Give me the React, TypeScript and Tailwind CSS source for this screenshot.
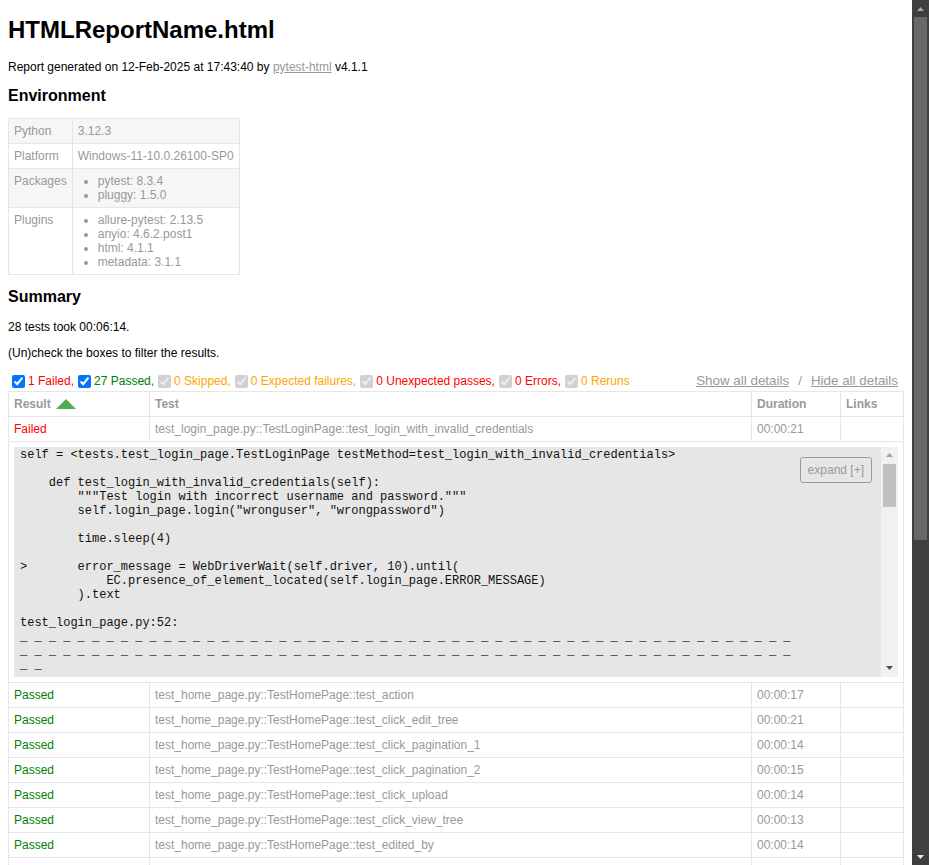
import React from "react";

const env: { key: string; value: string | string[] }[] = [
  { key: "Python", value: "3.12.3" },
  { key: "Platform", value: "Windows-11-10.0.26100-SP0" },
  { key: "Packages", value: ["pytest: 8.3.4", "pluggy: 1.5.0"] },
  {
    key: "Plugins",
    value: ["allure-pytest: 2.13.5", "anyio: 4.6.2.post1", "html: 4.1.1", "metadata: 3.1.1"],
  },
];

const filters = [
  { label: "1 Failed,", color: "text-[#ff0000]", on: true },
  { label: "27 Passed,", color: "text-[#008000]", on: true },
  { label: "0 Skipped,", color: "text-[#ffa500]", on: false },
  { label: "0 Expected failures,", color: "text-[#ffa500]", on: false },
  { label: "0 Unexpected passes,", color: "text-[#ff0000]", on: false },
  { label: "0 Errors,", color: "text-[#ff0000]", on: false },
  { label: "0 Reruns", color: "text-[#ffa500]", on: false },
];

const logLines = [
  "self = <tests.test_login_page.TestLoginPage testMethod=test_login_with_invalid_credentials>",
  "",
  "    def test_login_with_invalid_credentials(self):",
  '        """Test login with incorrect username and password."""',
  '        self.login_page.login("wronguser", "wrongpassword")',
  "",
  "        time.sleep(4)",
  "",
  ">       error_message = WebDriverWait(self.driver, 10).until(",
  "            EC.presence_of_element_located(self.login_page.ERROR_MESSAGE)",
  "        ).text",
  "",
  "test_login_page.py:52:",
  "_ ".repeat(53) + "_",
  "_ ".repeat(53) + "_",
  "_ _",
  "",
  "self = <selenium.webdriver.support.wait.WebDriverWait (session=\"3f0c\")>",
];

const passed = [
  ["test_home_page.py::TestHomePage::test_action", "00:00:17"],
  ["test_home_page.py::TestHomePage::test_click_edit_tree", "00:00:21"],
  ["test_home_page.py::TestHomePage::test_click_pagination_1", "00:00:14"],
  ["test_home_page.py::TestHomePage::test_click_pagination_2", "00:00:15"],
  ["test_home_page.py::TestHomePage::test_click_upload", "00:00:14"],
  ["test_home_page.py::TestHomePage::test_click_view_tree", "00:00:13"],
  ["test_home_page.py::TestHomePage::test_edited_by", "00:00:14"],
  ["test_home_page.py::TestHomePage::test_filter", "00:00:16"],
];

const cell = "border border-[#e6e6e6] p-[5px] text-left align-top";

function Triangle({ up }: { up: boolean }) {
  return (
    <svg width="7" height="4" viewBox="0 0 7 4">
      <path d={up ? "M0 4 L3.5 0 L7 4 Z" : "M0 0 L3.5 4 L7 0 Z"} fill="currentColor" />
    </svg>
  );
}

function LogWrapper() {
  return (
    <div className="flex h-[230px] bg-[#e6e6e6]">
      <div className="relative min-w-0 flex-1 overflow-hidden pl-[6px] pt-[1px] font-['Liberation_Mono','Courier_New',monospace] text-[12px] text-[#111]">
        {logLines.map((line, i) => (
          <div key={i} className="h-[14px] whitespace-pre leading-[14px]">
            {line}
          </div>
        ))}
        <div className="absolute right-[9px] top-[10px] rounded-[3px] border border-[#999] bg-[#e6e6e6] px-[7px] py-[5px] font-['Liberation_Sans',Arial,sans-serif] leading-[14px] text-[#999]">
          expand [+]
        </div>
      </div>
      <div className="flex w-[17px] shrink-0 flex-col bg-[#f1f1f1]">
        <div className="flex h-[17px] items-center justify-center text-[#a3a3a3]">
          <Triangle up />
        </div>
        <div className="flex-1 px-[2px]">
          <div className="h-[43px] bg-[#c1c1c1]" />
        </div>
        <div className="flex h-[17px] items-center justify-center text-[#505050]">
          <Triangle up={false} />
        </div>
      </div>
    </div>
  );
}

export default function App() {
  return (
    <div className="flex h-[865px] w-[929px] overflow-hidden bg-white font-['Liberation_Sans',Arial,sans-serif] text-[12px] leading-[14px] text-[#999]">
      <div className="min-w-0 flex-1 overflow-hidden px-2">
        <h1 className="mb-[16px] mt-[16px] text-[24px] font-bold leading-[28px] text-black">
          HTMLReportName.html
        </h1>
        <p className="text-black">
          Report generated on 12-Feb-2025 at 17:43:40 by{" "}
          <a className="text-[#999] underline">pytest-html</a> v4.1.1
        </p>
        <h2 className="mb-[13px] mt-[13px] text-[16px] font-bold leading-[18.4px] text-black">
          Environment
        </h2>
        <table className="border-collapse">
          <tbody>
            {env.map((row, i) => (
              <tr key={row.key} className={i % 2 === 0 ? "bg-[#f6f6f6]" : ""}>
                <td className={cell}>{row.key}</td>
                <td className={cell}>
                  {Array.isArray(row.value) ? (
                    <ul className="list-disc px-[20px]">
                      {row.value.map((v) => (
                        <li key={v}>{v}</li>
                      ))}
                    </ul>
                  ) : (
                    row.value
                  )}
                </td>
              </tr>
            ))}
          </tbody>
        </table>
        <h2 className="mb-[13px] mt-[13px] text-[16px] font-bold leading-[18.4px] text-black">
          Summary
        </h2>
        <p className="text-black">28 tests took 00:06:14.</p>
        <p className="mt-[12px] text-black">(Un)check the boxes to filter the results.</p>
        <div className="mt-[12px] flex h-[19px] items-center justify-between">
          <div className="flex items-center">
            {filters.map((f) => (
              <React.Fragment key={f.label}>
                <input
                  type="checkbox"
                  checked
                  readOnly
                  disabled={!f.on}
                  className="m-[3px_3px_3px_4px] h-[13px] w-[13px]"
                />
                <span className={f.color}>{f.label}</span>
              </React.Fragment>
            ))}
          </div>
          <div className="pr-[6px] text-[13.4px]">
            <a className="underline">Show all details</a>
            <span className="mx-[9px]">/</span>
            <a className="underline">Hide all details</a>
          </div>
        </div>
        <table className="w-full table-fixed border-collapse border border-[#e6e6e6]">
          <thead>
            <tr>
              <th className={`${cell} w-[141px] font-bold`}>
                <span className="inline-flex items-center">
                  Result
                  <svg width="20" height="10" viewBox="0 0 20 10" className="ml-[5px]">
                    <path d="M0 10 L10 0 L20 10 Z" fill="#4caf50" />
                  </svg>
                </span>
              </th>
              <th className={`${cell} font-bold`}>Test</th>
              <th className={`${cell} w-[89px] font-bold`}>Duration</th>
              <th className={`${cell} w-[63px] font-bold`}>Links</th>
            </tr>
          </thead>
          <tbody>
            <tr>
              <td className={`${cell} text-[#ff0000]`}>Failed</td>
              <td className={cell}>test_login_page.py::TestLoginPage::test_login_with_invalid_credentials</td>
              <td className={cell}>00:00:21</td>
              <td className={cell}></td>
            </tr>
            <tr>
              <td colSpan={4} className={cell}>
                <LogWrapper />
              </td>
            </tr>
            {passed.map(([name, dur]) => (
              <tr key={name}>
                <td className={`${cell} text-[#008000]`}>Passed</td>
                <td className={cell}>{name}</td>
                <td className={cell}>{dur}</td>
                <td className={cell}></td>
              </tr>
            ))}
          </tbody>
        </table>
      </div>
      <div className="flex w-[17px] shrink-0 flex-col bg-[#3f3f3f]">
        <div className="flex h-[17px] items-center justify-center text-[#a8a8a8]">
          <Triangle up />
        </div>
        <div className="flex-1 px-[2px]">
          <div className="h-[523px] bg-[#686868]" />
        </div>
        <div className="flex h-[17px] items-center justify-center text-[#e8e8e8]">
          <Triangle up={false} />
        </div>
      </div>
    </div>
  );
}
